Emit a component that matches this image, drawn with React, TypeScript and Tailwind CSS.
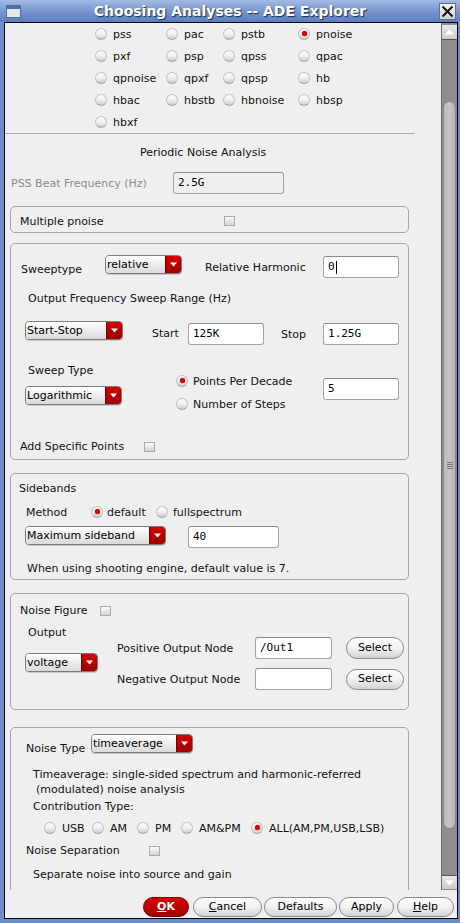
import React from "react";

function Radio({ on }: { on?: boolean }) {
  return (
    <span className="relative inline-block w-[12px] h-[12px] shrink-0 rounded-full border border-[#c2c2c2] border-b-[#a8a8a8] bg-gradient-to-b from-[#fbfbfb] via-[#f0f0f0] to-[#cdcdcd]">
      {on && (
        <span className="absolute left-[3px] top-[2px] w-[5px] h-[5px] rounded-full bg-[#e00000] shadow-[0_0_1px_#7a0000]" />
      )}
    </span>
  );
}

function Check() {
  return (
    <span className="inline-block w-[11px] h-[10px] shrink-0 border border-[#aaaaaa] bg-gradient-to-b from-[#fbfbfb] to-[#d4d4d4]" />
  );
}

function Drop({ text, cls }: { text: string; cls: string }) {
  return (
    <div
      className={`flex h-[19px] shrink-0 rounded-[4px] border border-[#7c7c7c] overflow-hidden shadow-[0_1px_0_rgba(0,0,0,0.15)] ${cls}`}
    >
      <div className="flex-1 flex items-start pt-[2px] pl-[1px] bg-gradient-to-b from-[#ffffff] to-[#dadada] text-[11px] leading-[13px] text-black">
        {text}
      </div>
      <div className="w-[16px] flex items-center justify-center bg-gradient-to-b from-[#d60000] to-[#9c0000] border-l border-[#7a0000]">
        <svg width="7" height="5" viewBox="0 0 7 5">
          <path d="M0 0.5h7L3.5 4.5z" fill="#ffffff" />
        </svg>
      </div>
    </div>
  );
}

function Inp({ v, cls, dis, caret }: { v: string; cls: string; dis?: boolean; caret?: boolean }) {
  return (
    <div
      className={`h-[22px] shrink-0 rounded-[3px] border border-[#a4a4a4] border-t-[#8a8a8a] ${
        dis ? "bg-[#efefef]" : "bg-white"
      } flex items-center pl-[4px] font-['DejaVu_Sans_Mono',monospace] text-[11px] text-black ${cls}`}
    >
      {v}
      {caret && <span className="inline-block w-px h-[13px] bg-black ml-px" />}
    </div>
  );
}

function Pill({ children, cls, red }: { children: React.ReactNode; cls: string; red?: boolean }) {
  return (
    <div
      className={`shrink-0 flex items-center justify-center rounded-full border text-[11px] ${
        red
          ? "border-[#7a0000] bg-gradient-to-b from-[#d80000] to-[#a40000] text-white font-bold"
          : "border-[#8a8a8a] bg-gradient-to-b from-[#fdfdfd] via-[#f2f2f2] to-[#d2d2d2] text-black"
      } ${cls}`}
    >
      {children}
    </div>
  );
}

function Lbl({ children, cls }: { children: React.ReactNode; cls?: string }) {
  return <div className={`leading-[13px] whitespace-nowrap ${cls ?? ""}`}>{children}</div>;
}

const grid = [
  ["pss", "pac", "pstb", "pnoise"],
  ["pxf", "psp", "qpss", "qpac"],
  ["qpnoise", "qpxf", "qpsp", "hb"],
  ["hbac", "hbstb", "hbnoise", "hbsp"],
  ["hbxf"],
];
const colW = ["w-[71px]", "w-[57px]", "w-[75px]", "w-[80px]"];

export default function App() {
  return (
    <div className="w-[460px] h-[923px] bg-[#6c8dc8] flex flex-col font-['DejaVu_Sans',sans-serif] text-[11px] text-[#111111] overflow-hidden">
      {/* Title bar */}
      <div className="h-[22px] shrink-0 flex items-center bg-gradient-to-b from-[#a4bbe3] via-[#7896cf] to-[#5b7ec0]">
        <div className="ml-[6px] w-[15px] h-[13px] border border-[#5a6f90] bg-[#e4e8e4] flex flex-col">
          <div className="h-[3px] bg-[#4a6ea8]" />
        </div>
        <div className="flex-1 text-center text-white font-bold text-[14px] leading-[18px] [text-shadow:1px_1px_1px_#1d2f55]">
          Choosing Analyses -- ADE Explorer
        </div>
        <div className="mr-[4px] w-[17px] h-[17px] border border-[#5e6f8c] bg-gradient-to-b from-[#f4f4f4] to-[#d0d0d0] flex items-center justify-center">
          <svg width="13" height="13" viewBox="0 0 13 13">
            <path d="M1.5 1.5L11.5 11.5M11.5 1.5L1.5 11.5" stroke="#111" strokeWidth="2" />
          </svg>
        </div>
      </div>

      {/* Body */}
      <div className="ml-[4px] w-[454px] h-[897px] shrink-0 border border-black bg-[#efefef] flex flex-col">
        <div className="h-[867px] flex">
          {/* content viewport */}
          <div className="w-[436px] h-[867px] overflow-hidden flex flex-col">
            {grid.map((row, i) => (
              <div key={i} className="h-[22px] shrink-0 flex items-center pl-[90px]">
                {row.map((n, j) => (
                  <div key={n} className={`${colW[j]} flex items-center gap-[6px]`}>
                    <Radio on={n === "pnoise"} />
                    <span className="leading-[13px]">{n}</span>
                  </div>
                ))}
              </div>
            ))}
            <div className="h-px w-[410px] shrink-0 bg-[#a9a9a9]" />
            <Lbl cls="mt-[12px] pl-[135px]">Periodic Noise Analysis</Lbl>
            <div className="mt-[13px] h-[22px] shrink-0 flex items-center pl-[6px]">
              <div className="w-[162px] text-[#8c8c8c] leading-[13px]">PSS Beat Frequency (Hz)</div>
              <Inp v="2.5G" cls="w-[111px]" dis />
            </div>

            {/* Multiple pnoise */}
            <div className="mt-[12px] ml-[5px] w-[399px] h-[27px] shrink-0 rounded-[5px] border border-[#a6a6a6] flex items-center pl-[9px] pt-[3px]">
              <div className="w-[204px] leading-[13px]">Multiple pnoise</div>
              <Check />
            </div>

            {/* Sweep box */}
            <div className="mt-[10px] ml-[5px] w-[399px] h-[217px] shrink-0 rounded-[5px] border border-[#a6a6a6] flex flex-col">
              <div className="mt-[11px] h-[23px] flex items-start">
                <Lbl cls="w-[94px] pl-[10px] mt-[8px]">Sweeptype</Lbl>
                <Drop text="relative" cls="w-[77px]" />
                <Lbl cls="w-[141px] pl-[23px] mt-[6px]">Relative Harmonic</Lbl>
                <Inp v="0" cls="w-[76px] mt-[1px]" caret />
              </div>
              <Lbl cls="mt-[14px] pl-[17px]">Output Frequency Sweep Range (Hz)</Lbl>
              <div className="mt-[16px] h-[25px] flex items-start">
                <div className="w-[14px]" />
                <Drop text="Start-Stop" cls="w-[98px]" />
                <Lbl cls="w-[65px] pl-[29px] mt-[6px]">Start</Lbl>
                <Inp v="125K" cls="w-[76px] mt-[2px]" />
                <Lbl cls="w-[59px] pl-[17px] mt-[7px]">Stop</Lbl>
                <Inp v="1.25G" cls="w-[76px] mt-[2px]" />
              </div>
              <div className="mt-[18px] flex items-start">
                <div className="w-[165px] pl-[14px] flex flex-col">
                  <Lbl cls="pl-[3px]">Sweep Type</Lbl>
                  <Drop text="Logarithmic" cls="w-[97px] mt-[9px]" />
                </div>
                <div className="w-[147px] mt-[9px] flex flex-col">
                  <div className="h-[16px] flex items-center gap-[5px]">
                    <Radio on />
                    <span className="leading-[13px]">Points Per Decade</span>
                  </div>
                  <div className="mt-[7px] h-[16px] flex items-center gap-[5px]">
                    <Radio />
                    <span className="leading-[13px]">Number of Steps</span>
                  </div>
                </div>
                <Inp v="5" cls="w-[76px] mt-[14px]" />
              </div>
              <div className="mt-[28px] h-[13px] flex items-center pl-[9px]">
                <div className="w-[124px] leading-[13px]">Add Specific Points</div>
                <Check />
              </div>
            </div>

            {/* Sidebands */}
            <div className="mt-[13px] ml-[5px] w-[399px] h-[107px] shrink-0 rounded-[5px] border border-[#a6a6a6] flex flex-col">
              <Lbl cls="mt-[8px] pl-[8px]">Sidebands</Lbl>
              <div className="mt-[10px] h-[14px] flex items-center pl-[15px]">
                <div className="w-[65px] leading-[13px]">Method</div>
                <Radio on />
                <span className="ml-[4px] w-[49px] leading-[13px]">default</span>
                <Radio />
                <span className="ml-[5px] leading-[13px]">fullspectrum</span>
              </div>
              <div className="mt-[7px] flex items-start pl-[14px]">
                <Drop text="Maximum sideband" cls="w-[141px]" />
                <Inp v="40" cls="w-[91px] ml-[22px]" />
              </div>
              <Lbl cls="mt-[14px] pl-[16px]">When using shooting engine, default value is 7.</Lbl>
            </div>

            {/* Noise figure */}
            <div className="mt-[13px] ml-[5px] w-[399px] h-[117px] shrink-0 rounded-[5px] border border-[#a6a6a6] flex flex-col">
              <div className="mt-[10px] h-[13px] flex items-center pl-[9px]">
                <div className="w-[80px] leading-[13px]">Noise Figure</div>
                <Check />
              </div>
              <div className="mt-[9px] flex items-start">
                <div className="w-[106px] pl-[14px] flex flex-col">
                  <Lbl cls="pl-[3px]">Output</Lbl>
                  <Drop text="voltage" cls="w-[73px] mt-[14px]" />
                </div>
                <div className="mt-[11px] flex flex-col">
                  <div className="h-[22px] flex items-center">
                    <div className="w-[138px] leading-[13px]">Positive Output Node</div>
                    <Inp v="/Out1" cls="w-[77px]" />
                    <Pill cls="ml-[14px] w-[58px] h-[22px]">Select</Pill>
                  </div>
                  <div className="mt-[9px] h-[22px] flex items-center">
                    <div className="w-[138px] leading-[13px]">Negative Output Node</div>
                    <Inp v="" cls="w-[77px]" />
                    <Pill cls="ml-[14px] w-[58px] h-[21px]">Select</Pill>
                  </div>
                </div>
              </div>
            </div>

            {/* Noise type */}
            <div className="mt-[17px] ml-[5px] w-[399px] h-[200px] shrink-0 rounded-[5px] border border-[#a6a6a6] flex flex-col">
              <div className="mt-[6px] flex items-start">
                <Lbl cls="w-[80px] pl-[15px] mt-[8px]">Noise Type</Lbl>
                <Drop text="timeaverage" cls="w-[102px]" />
              </div>
              <div className="mt-[12px] pl-[22px] leading-[15px] whitespace-nowrap">
                <div>Timeaverage: single-sided spectrum and harmonic-referred</div>
                <div className="pl-[3px]">(modulated) noise analysis</div>
              </div>
              <Lbl cls="mt-[3px] pl-[22px]">Contribution Type:</Lbl>
              <div className="mt-[8px] h-[14px] flex items-center pl-[33px]">
                {[
                  ["USB", "w-[48px]"],
                  ["AM", "w-[45px]"],
                  ["PM", "w-[44px]"],
                  ["AM&PM", "w-[70px]"],
                  ["ALL(AM,PM,USB,LSB)", "w-[140px]"],
                ].map(([t, w]) => (
                  <div key={t} className={`${w} flex items-center gap-[6px]`}>
                    <Radio on={t.startsWith("ALL")} />
                    <span className="leading-[13px]">{t}</span>
                  </div>
                ))}
              </div>
              <div className="mt-[9px] h-[13px] flex items-center pl-[15px]">
                <div className="w-[123px] leading-[13px]">Noise Separation</div>
                <Check />
              </div>
              <Lbl cls="mt-[11px] pl-[22px]">Separate noise into source and gain</Lbl>
            </div>
          </div>

          {/* Scrollbar */}
          <div className="w-[16px] h-[867px] flex flex-col bg-[#8d8d8d] border-l border-[#6d6d6d]">
            <div className="mt-[2px] h-[15px] shrink-0 flex items-center justify-center bg-gradient-to-b from-[#e8e8e8] to-[#cbcbcb] border-b border-[#555555]">
              <svg width="9" height="6" viewBox="0 0 9 6">
                <path d="M0 5.5h9L4.5 0.5z" fill="#ffffff" />
              </svg>
            </div>
            <div className="mt-[61px] mx-[1px] h-[728px] shrink-0 rounded-[7px] border border-[#8a8a8a] bg-gradient-to-r from-[#b8b8b8] via-[#c6c6c6] to-[#b4b4b4] flex flex-col items-center justify-center gap-[1px]">
              <div className="w-[6px] h-px bg-[#7a7a7a]" />
              <div className="w-[6px] h-px bg-[#7a7a7a]" />
              <div className="w-[6px] h-px bg-[#7a7a7a]" />
              <div className="w-[6px] h-px bg-[#7a7a7a]" />
            </div>
            <div className="mt-[46px] h-[14px] shrink-0 flex items-center justify-center bg-gradient-to-b from-[#e8e8e8] to-[#cbcbcb] border-t border-[#555555]">
              <svg width="9" height="6" viewBox="0 0 9 6">
                <path d="M0 0.5h9L4.5 5.5z" fill="#ffffff" />
              </svg>
            </div>
          </div>
        </div>

        {/* Button row */}
        <div className="h-[28px] shrink-0 flex items-start pt-[7px] pl-[138px]">
          <Pill red cls="w-[46px] h-[20px]">
            <span className="underline">O</span>K
          </Pill>
          <Pill cls="ml-[4px] w-[69px] h-[20px]">
            <span className="underline">C</span>ancel
          </Pill>
          <Pill cls="ml-[2px] w-[73px] h-[20px]">Defaults</Pill>
          <Pill cls="ml-[2px] w-[55px] h-[20px]">Apply</Pill>
          <Pill cls="ml-[3px] w-[57px] h-[20px]">
            <span className="underline">H</span>elp
          </Pill>
        </div>
      </div>
    </div>
  );
}
